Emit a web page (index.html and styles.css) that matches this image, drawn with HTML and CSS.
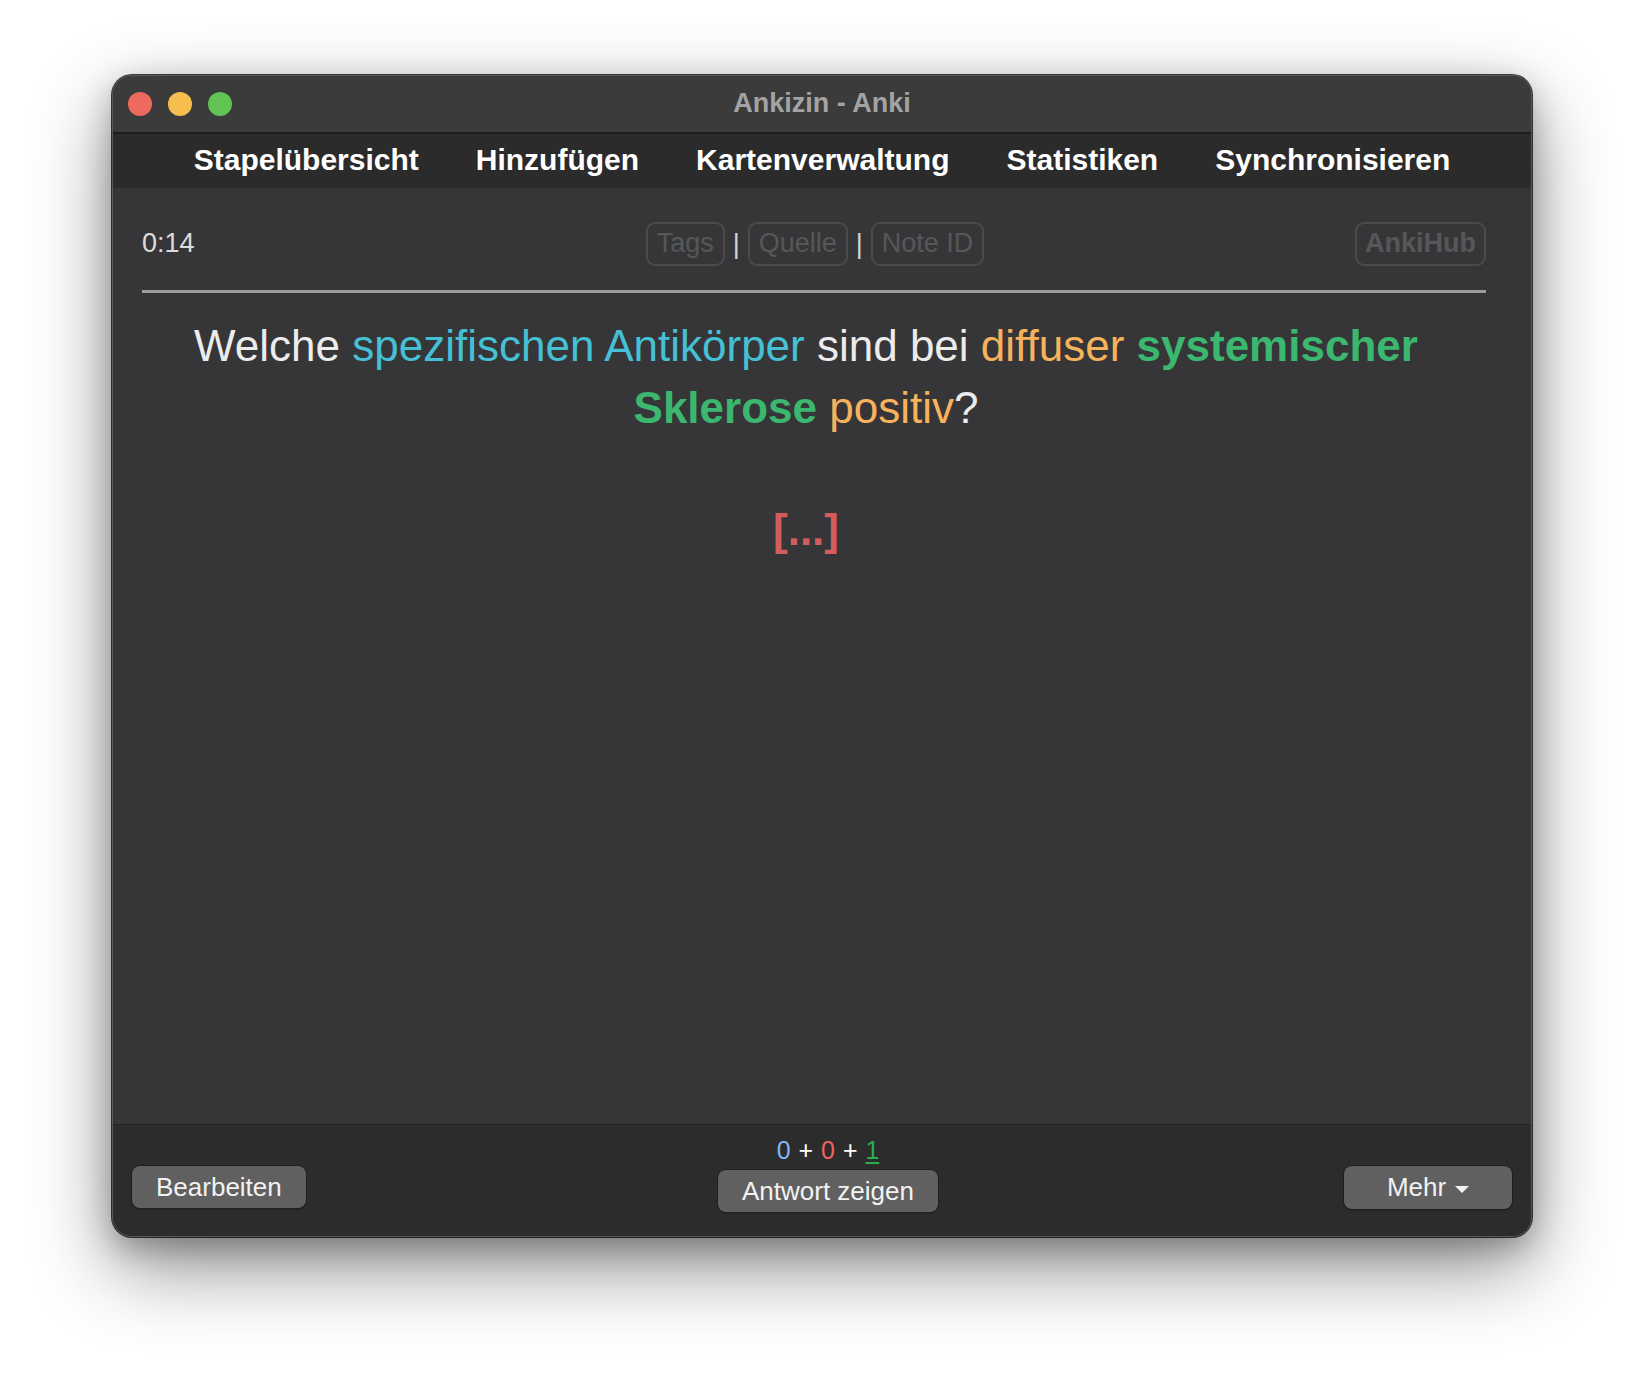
FILE: index.html
```html
<!DOCTYPE html>
<html lang="de">
<head>
<meta charset="utf-8">
<title>Ankizin - Anki</title>
<link rel="stylesheet" href="styles.css">
</head>
<body>
<div class="window">
  <div class="titlebar">
    <div class="lights">
      <span class="light red"></span>
      <span class="light yellow"></span>
      <span class="light green"></span>
    </div>
    <div class="title">Ankizin - Anki</div>
    <div class="spacer"></div>
  </div>
  <nav class="toolbar">
    <span class="nav-item">Stapelübersicht</span>
    <span class="nav-item">Hinzufügen</span>
    <span class="nav-item">Kartenverwaltung</span>
    <span class="nav-item">Statistiken</span>
    <span class="nav-item">Synchronisieren</span>
  </nav>
  <main class="content">
    <div class="header">
      <div class="timer">0:14</div>
      <div class="meta">
        <span class="chip">Tags</span><span class="pipe">|</span><span class="chip">Quelle</span><span class="pipe">|</span><span class="chip">Note ID</span>
      </div>
      <div class="hub"><span class="chip chip-bold">AnkiHub</span></div>
    </div>
    <hr class="divider">
    <div class="question">Welche <span class="c-cyan">spezifischen Antikörper</span> sind bei <span class="c-orange">diffuser</span> <b class="c-green">systemischer Sklerose</b> <span class="c-orange">positiv</span>?</div>
    <div class="cloze">[...]</div>
  </main>
  <footer class="bottombar">
    <div class="left"><button class="btn">Bearbeiten</button></div>
    <div class="center">
      <div class="counts"><span class="n-new">0</span> + <span class="n-lrn">0</span> + <span class="n-rev">1</span></div>
      <button class="btn">Antwort zeigen</button>
    </div>
    <div class="right"><button class="btn btn-more">Mehr <span class="caret"></span></button></div>
  </footer>
</div>
</body>
</html>
```

FILE: styles.css
```css
html, body {
  margin: 0;
  padding: 0;
  background: #ffffff;
}
body {
  font-family: "Liberation Sans", Arial, Helvetica, sans-serif;
  width: 1644px;
  height: 1384px;
  overflow: hidden;
}
.window {
  box-sizing: border-box;
  margin: 75px 0 0 112px;
  width: 1420px;
  height: 1162px;
  border-radius: 20px;
  border: 1px solid #5a5a5a;
  overflow: hidden;
  display: flex;
  flex-direction: column;
  background: #363638;
  box-shadow: 0 0 0 1px rgba(0,0,0,0.75), 0 30px 80px rgba(0,0,0,0.45), 0 10px 30px rgba(0,0,0,0.25);
}
.titlebar {
  height: 56px;
  flex: none;
  background: #3b3b3b;
  border-bottom: 2px solid #1c1c1c;
  display: grid;
  grid-template-columns: 1fr auto 1fr;
  align-items: center;
}
.lights {
  display: flex;
  gap: 16px;
  padding-left: 15px;
  padding-bottom: 1px;
}
.light {
  width: 24px;
  height: 24px;
  border-radius: 50%;
  display: block;
}
.red { background: #ee6a5f; }
.yellow { background: #f5be4f; }
.green { background: #61c454; }
.title {
  font-size: 27px;
  font-weight: bold;
  color: #a3a3a3;
  padding-bottom: 2px;
}
.toolbar {
  height: 54px;
  flex: none;
  background: #2b2b2b;
  border-bottom: 1px solid #313131;
  display: flex;
  justify-content: center;
  align-items: center;
  gap: 57px;
}
.nav-item {
  font-size: 30px;
  font-weight: bold;
  color: #ffffff;
  padding-bottom: 3px;
}
.content {
  flex: 1;
  background: #363638;
  padding: 33px 45px 0 29px;
}
.header {
  display: grid;
  grid-template-columns: 1fr auto 1fr;
  align-items: center;
  height: 44px;
}
.timer {
  font-size: 27px;
  color: #dcdcdc;
  padding-bottom: 2px;
}
.meta {
  display: flex;
  align-items: center;
  padding-left: 2px;
}
.hub {
  display: flex;
  justify-content: flex-end;
}
.chip {
  display: inline-block;
  box-sizing: border-box;
  height: 44px;
  line-height: 38px;
  padding: 0 9px;
  border: 2px solid #4b4b4d;
  border-radius: 9px;
  font-size: 27px;
  color: #575759;
}
.chip-bold {
  font-weight: bold;
  padding: 0 8px;
}
.pipe {
  font-size: 27px;
  color: #d4d4d4;
  margin: 0 8px;
  line-height: 38px;
}
.divider {
  border: none;
  height: 3px;
  margin: 24px 0 0 0;
  background: #9d9d9d;
}
.question {
  margin-top: 22px;
  padding-right: 16px;
  font-size: 44px;
  line-height: 62px;
  text-align: center;
  color: #ececec;
}
.c-cyan { color: #45c0d5; }
.c-orange { color: #f7b25c; }
.c-green { color: #3bb76f; }
.cloze {
  margin-top: 60px;
  padding-right: 16px;
  font-size: 44px;
  line-height: 62px;
  font-weight: bold;
  text-align: center;
  color: #d35c5c;
}
.bottombar {
  height: 111px;
  flex: none;
  background: #2c2c2c;
  border-top: 1px solid #232323;
  display: grid;
  grid-template-columns: 1fr auto 1fr;
  align-items: start;
  padding: 0 19px;
}
.left { padding-top: 41px; }
.right {
  padding-top: 41px;
  display: flex;
  justify-content: flex-end;
}
.center {
  padding-top: 11px;
  padding-left: 12px;
  display: flex;
  flex-direction: column;
  align-items: center;
}
.counts {
  font-size: 25px;
  line-height: 28px;
  color: #ffffff;
  margin-bottom: 6px;
  word-spacing: 1px;
}
.n-new { color: #7db8f6; }
.n-lrn { color: #ef625e; }
.n-rev { color: #25b24b; text-decoration: underline; text-underline-offset: 3px; }
.btn {
  font-family: "Liberation Sans", Arial, Helvetica, sans-serif;
  font-size: 26px;
  color: #f2f2f2;
  background: #606060;
  border: none;
  border-radius: 8px;
  height: 42px;
  padding: 0 24px;
  box-shadow: 0 0 0 1px #1f1f1f, 0 1px 2px rgba(0,0,0,0.4);
  display: inline-flex;
  align-items: center;
  justify-content: center;
}
.btn-more {
  width: 168px;
  height: 43px;
  padding: 0;
  gap: 9px;
}
.caret {
  width: 0;
  height: 0;
  border-left: 7.5px solid transparent;
  border-right: 7.5px solid transparent;
  border-top: 7px solid #f2f2f2;
  margin-top: 3px;
}
```
